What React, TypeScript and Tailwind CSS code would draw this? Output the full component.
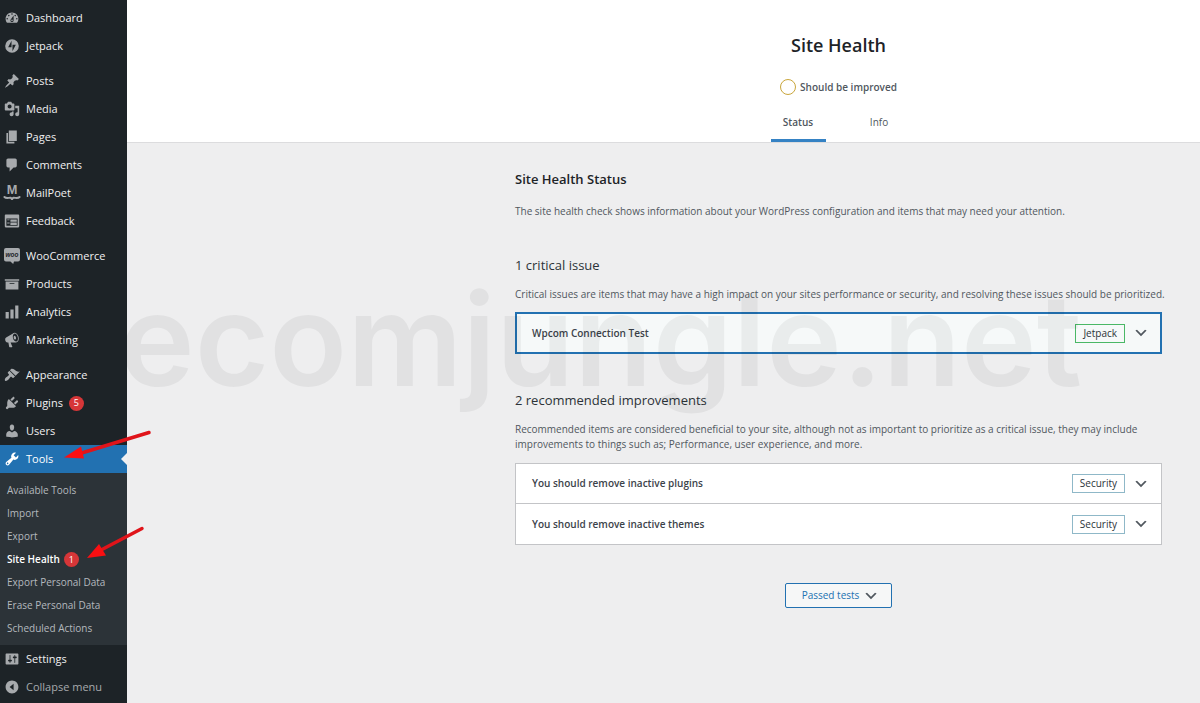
import React from "react";

const icons: Record<string, string> = {
  dashboard:
    "M3.76 16h12.48c1.1-1.37 1.76-3.11 1.76-5 0-4.42-3.58-8-8-8s-8 3.58-8 8c0 1.89.66 3.63 1.76 5zM10 4c.55 0 1 .45 1 1s-.45 1-1 1-1-.45-1-1 .45-1 1-1zM6 6c.55 0 1 .45 1 1s-.45 1-1 1-1-.45-1-1 .45-1 1-1zm8 0c.55 0 1 .45 1 1s-.45 1-1 1-1-.45-1-1 .45-1 1-1zm-5.37 5.55L12 7v6c0 1.1-.9 2-2 2s-2-.9-2-2c0-.57.24-1.08.63-1.45zM4 10c.55 0 1 .45 1 1s-.45 1-1 1-1-.45-1-1 .45-1 1-1zm12 0c.55 0 1 .45 1 1s-.45 1-1 1-1-.45-1-1 .45-1 1-1zm-5 3c0-.55-.45-1-1-1s-1 .45-1 1 .45 1 1 1 1-.45 1-1z",
  jetpack:
    "M10 1.5a8.5 8.5 0 1 0 0 17 8.5 8.5 0 0 0 0-17zM9.4 11.6H5.2l4.2-8.3zM10.6 16.7V8.4h4.2z",
  posts:
    "M10.44 3.02l1.82-1.82 6.36 6.35-1.83 1.82c-1.05-.68-2.48-.57-3.41.36l-.75.75c-.92.93-1.04 2.35-.35 3.41l-1.83 1.82-2.41-2.41-2.8 2.79c-.42.42-3.38 2.71-3.8 2.29s1.86-3.39 2.28-3.81l2.79-2.79L4.1 9.36l1.83-1.82c1.05.69 2.48.57 3.4-.36l.75-.75c.93-.92 1.05-2.35.36-3.41z",
  media:
    "M13 11V4c0-.55-.45-1-1-1h-1.67L9 1H5L3.67 3H2c-.55 0-1 .45-1 1v7c0 .55.45 1 1 1h10c.55 0 1-.45 1-1zM7 4.5c1.38 0 2.5 1.12 2.5 2.5S8.38 9.5 7 9.5 4.5 8.38 4.5 7 5.62 4.5 7 4.5zM14 6h5v10.5c0 1.38-1.12 2.5-2.5 2.5S14 17.88 14 16.5s1.12-2.5 2.5-2.5c.17 0 .34.02.5.05V9h-3V6zm-4 8.05V13h2v3.5c0 1.38-1.12 2.5-2.5 2.5S7 17.88 7 16.5 8.12 14 9.5 14c.17 0 .34.02.5.05z",
  pages: "M6 15V2h10v13H6zm-1 1h8v2H3V5h2v11z",
  comments:
    "M5 2h9c1.1 0 2 .9 2 2v7c0 1.1-.9 2-2 2h-2l-5 5v-5H5c-1.1 0-2-.9-2-2V4c0-1.1.9-2 2-2z",
  feedback:
    "M2 2h16c.55 0 1 .45 1 1v14c0 .55-.45 1-1 1H2c-.55 0-1-.45-1-1V3c0-.55.45-1 1-1zm15 14V7H3v9h14zM4 8v1h3V8H4zm4 0v3h8V8H8zm-4 4v1h3v-1H4zm4 0v3h8v-3H8z",
  products: "M19 4v2H1V4h18zM2 7h16v10H2V7zm11 3V9H7v1h6z",
  analytics: "M18 18V2h-4v16h4zm-6 0V7H8v11h4zm-6 0v-8H2v8h4z",
  marketing:
    "M18.15 5.94c.46 1.62.38 3.22-.02 4.48-.42 1.28-1.26 2.18-2.3 2.48-.16.06-.26.06-.4.06-.06.02-.12.02-.18.02-.06.02-.14.02-.22.02h-6.8l2.22 5.5c.02.14-.06.26-.14.34-.08.1-.24.16-.34.16H6.95c-.1 0-.26-.06-.34-.16-.08-.08-.16-.2-.14-.34l-1-5.5H4.25l-.02-.02c-.5.06-1.08-.18-1.54-.62s-.88-1.08-1.06-1.88c-.24-.8-.2-1.56-.02-2.2.18-.62.58-1.08 1.06-1.3l.02-.02 9-5.4c.1-.06.18-.1.24-.16.06-.04.14-.08.24-.12.16-.08.28-.12.5-.18 1.04-.3 2.24.1 3.22.98s1.84 2.24 2.26 3.86zm-2.58 5.98h-.02c.4-.1.74-.34 1.04-.7.58-.7.86-1.76.86-3.04 0-.64-.1-1.3-.28-1.98-.34-1.36-1.02-2.5-1.78-3.24s-1.68-1.1-2.46-.88c-.82.22-1.4.96-1.7 2-.32 1.04-.28 2.36.06 3.72.38 1.36 1 2.5 1.8 3.24.78.74 1.62 1.1 2.48.88zm-2.54-7.08c.22-.04.42-.02.62.04.38.16.76.48 1.02 1s.42 1.2.42 1.78c0 .3-.04.56-.12.8-.18.48-.44.84-.86.94-.34.1-.8-.06-1.14-.4s-.64-.86-.78-1.5c-.18-.62-.12-1.24.02-1.72s.48-.84.82-.94z",
  appearance:
    "M14.48 11.06L7.41 3.99l1.5-1.5c.5-.56 2.3-.47 3.51.32 1.21.8 1.43 1.28 2.91 2.1 1.18.64 2.45 1.26 4.45.85zm-.71.71L6.7 4.7 4.93 6.47c-.39.39-.39 1.02 0 1.41l1.06 1.06c.39.39.39 1.03 0 1.42-.6.6-1.43 1.11-2.21 1.69-.35.26-.7.53-1.01.84C1.43 14.23.4 16.08 1.4 17.07c.99 1 2.84-.03 4.18-1.36.31-.31.58-.66.85-1.02.57-.78 1.08-1.61 1.69-2.21.39-.39 1.02-.39 1.41 0l1.06 1.06c.39.39 1.02.39 1.41 0z",
  plugins:
    "M13.11 4.36L9.87 7.6 8 5.73l3.24-3.24c.35-.34 1.05-.2 1.56.32.52.51.66 1.21.31 1.55zm-8 1.77l.91-1.12 9.01 9.01-1.19.84c-.71.71-2.63 1.16-3.82 1.16H6.14L4.9 17.26c-.59.59-1.54.59-2.12 0-.59-.58-.59-1.53 0-2.12l1.24-1.24v-3.88c0-1.13.4-3.19 1.09-3.89zm7.26 3.97l3.24-3.24c.34-.35 1.04-.21 1.55.31.52.51.66 1.21.31 1.55l-3.24 3.25z",
  users:
    "M10 9.25c-2.27 0-2.73-3.44-2.73-3.44C7 4.02 7.82 2 9.97 2c2.16 0 2.98 2.02 2.71 3.81 0 0-.41 3.44-2.68 3.44zm0 2.57L12.72 10c2.39 0 4.52 2.33 4.52 4.53v2.49s-3.65 1.13-7.24 1.13c-3.65 0-7.24-1.13-7.24-1.13v-2.49c0-2.25 1.94-4.48 4.47-4.48z",
  tools:
    "M16.68 9.77c-1.34 1.34-3.3 1.67-4.95.99l-5.41 6.52c-.99.99-2.59.99-3.58 0s-.99-2.59 0-3.57l6.52-5.42c-.68-1.65-.35-3.61.99-4.95 1.28-1.28 3.12-1.62 4.72-1.06l-2.89 2.89 2.82 2.82 2.86-2.87c.53 1.58.18 3.39-1.08 4.65zM3.81 16.21c.4.39 1.04.39 1.43 0 .4-.4.4-1.04 0-1.43-.39-.4-1.03-.4-1.43 0-.39.39-.39 1.03 0 1.43z",
  settings:
    "M18 16V4c0-.55-.45-1-1-1H3c-.55 0-1 .45-1 1v12c0 .55.45 1 1 1h14c.55 0 1-.45 1-1zM8 11h1c.55 0 1 .45 1 1s-.45 1-1 1H8v1.5c0 .28-.22.5-.5.5s-.5-.22-.5-.5V13H6c-.55 0-1-.45-1-1s.45-1 1-1h1V5.5c0-.28.22-.5.5-.5s.5.22.5.5V11zm5-2h-1c-.55 0-1-.45-1-1s.45-1 1-1h1V5.5c0-.28.22-.5.5-.5s.5.22.5.5V7h1c.55 0 1 .45 1 1s-.45 1-1 1h-1v5.5c0 .28-.22.5-.5.5s-.5-.22-.5-.5V9z",
  collapse:
    "M10 2c4.42 0 8 3.58 8 8s-3.58 8-8 8-8-3.58-8-8 3.58-8 8-8zm2 12V6l-5 4z",
};

function MenuIcon({ name }: { name: string }) {
  if (name === "mailpoet") {
    return (
      <svg viewBox="0 0 20 20" className="size-4 shrink-0 overflow-visible fill-current" aria-hidden="true">
        <text x="10" y="11" textAnchor="middle" fontSize="16" fontWeight="700" fontFamily="Liberation Sans, sans-serif">
          M
        </text>
        <path
          d="M.5 15c2.2 2.2 5.5.8 7.5 1 1.2.1 1.5 1.6 2 1.6s.8-1.5 2-1.6c2-.2 5.3 1.2 7.5-1"
          fill="none"
          stroke="currentColor"
          strokeWidth="2.4"
          strokeLinecap="round"
        />
      </svg>
    );
  }
  if (name === "woocommerce") {
    return (
      <svg viewBox="0 0 20 20" className="size-4 shrink-0 overflow-visible" aria-hidden="true">
        <path
          d="M2.5 0h15A2.5 2.5 0 0 1 20 2.500v12a2.500 2.500 0 0 1-2.500 2.500H12.500l-1 3-3.500-3H2.500A2.500 2.500 0 0 1 0 14.500v-12A2.500 2.500 0 0 1 2.500 0z"
          fill="currentColor"
        />
        <text
          x="10"
          y="11.5"
          textAnchor="middle"
          fontSize="8"
          fontWeight="700"
          fontStyle="italic"
          fontFamily="Liberation Sans, sans-serif"
          fill="#1d2327"
        >
          woo
        </text>
      </svg>
    );
  }
  return (
    <svg viewBox="0 0 20 20" className="size-4 shrink-0 fill-current" aria-hidden="true">
      <path fillRule="evenodd" d={icons[name]} />
    </svg>
  );
}

function Chevron() {
  return (
    <svg viewBox="0 0 20 20" className="size-4 shrink-0 fill-[#50575e]" aria-hidden="true">
      <path d="M5 6l5 5 5-5 2 1-7 7-7-7z" />
    </svg>
  );
}

interface MenuItem {
  label: string;
  icon: string;
  badge?: number;
  active?: boolean;
}

const menuGroups: MenuItem[][] = [
  [
    { label: "Dashboard", icon: "dashboard" },
    { label: "Jetpack", icon: "jetpack" },
  ],
  [
    { label: "Posts", icon: "posts" },
    { label: "Media", icon: "media" },
    { label: "Pages", icon: "pages" },
    { label: "Comments", icon: "comments" },
    { label: "MailPoet", icon: "mailpoet" },
    { label: "Feedback", icon: "feedback" },
  ],
  [
    { label: "WooCommerce", icon: "woocommerce" },
    { label: "Products", icon: "products" },
    { label: "Analytics", icon: "analytics" },
    { label: "Marketing", icon: "marketing" },
  ],
  [
    { label: "Appearance", icon: "appearance" },
    { label: "Plugins", icon: "plugins", badge: 5 },
    { label: "Users", icon: "users" },
    { label: "Tools", icon: "tools", active: true },
  ],
];

const toolsMenu = [
  { label: "Available Tools" },
  { label: "Import" },
  { label: "Export" },
  { label: "Site Health", badge: 1, current: true },
  { label: "Export Personal Data" },
  { label: "Erase Personal Data" },
  { label: "Scheduled Actions" },
];

function Badge({ count }: { count: number }) {
  return (
    <span className="flex size-[15px] items-center justify-center rounded-full bg-[#d63638] text-[9px] font-normal text-white">
      {count}
    </span>
  );
}

function MenuLink({ item }: { item: MenuItem }) {
  return (
    <a
      href="#"
      className={
        item.active
          ? "relative flex h-7 items-center gap-[6px] bg-[#2271b1] pl-1 text-white"
          : "flex h-7 items-center gap-[6px] pl-1 text-[#f0f0f1]"
      }
    >
      <span className={item.active ? "text-white" : "text-[#a7aaad]"}>
        <MenuIcon name={item.icon} />
      </span>
      {item.label}
      {item.badge && <Badge count={item.badge} />}
      {item.active && (
        <span className="absolute right-0 border-y-[6px] border-r-[6px] border-y-transparent border-r-[#f0f0f1]" />
      )}
    </a>
  );
}

function Sidebar() {
  return (
    <nav className="relative z-10 w-[127px] shrink-0 bg-[#1d2327] pt-1 text-[11px]">
      <div className="flex flex-col gap-[7px]">
        {menuGroups.map((group) => (
          <div key={group[0].label}>
            {group.map((item) => (
              <MenuLink key={item.label} item={item} />
            ))}
          </div>
        ))}
      </div>

      {/* Tools submenu */}
      <div className="bg-[#2c3338] pt-[6px] pb-[5px] text-[10px]">
        {toolsMenu.map((item) => (
          <a
            key={item.label}
            href="#"
            className={
              item.current
                ? "flex h-[23px] items-center gap-1 pl-[7px] font-semibold text-white"
                : "flex h-[23px] items-center pl-[7px] text-[#b4b9be]"
            }
          >
            {item.label}
            {item.badge && <Badge count={item.badge} />}
          </a>
        ))}
      </div>

      <MenuLink item={{ label: "Settings", icon: "settings" }} />
      <button type="button" className="flex h-7 w-full items-center gap-[6px] pl-1 text-[#a7aaad]">
        <MenuIcon name="collapse" />
        Collapse menu
      </button>
    </nav>
  );
}

interface IssueProps {
  title: string;
  tag: string;
}

function Issue({ title, tag }: IssueProps) {
  const critical = tag === "Jetpack";
  return (
    <button type="button" className="flex h-10 w-full items-center gap-2 pr-3 pl-4 text-left">
      <span className="flex-1 font-semibold text-[#3c434a]">{title}</span>
      <span
        className={
          critical
            ? "border border-[#4ab866] px-[7px] leading-[17px] font-medium text-[#2c3338]"
            : "border border-[#8fb8c8] px-[7px] leading-[17px] font-medium text-[#2c3338]"
        }
      >
        {tag}
      </span>
      <Chevron />
    </button>
  );
}

function Header() {
  return (
    <header className="border-b border-[#dcdcde] bg-white">
      <div className="mr-[38px] ml-auto flex max-w-[647px] flex-col items-center pt-8">
        <h1 className="text-[18px] leading-[26px] font-semibold text-[#1d2327]">Site Health</h1>
        <div className="mt-5 flex h-[18px] items-center gap-1 font-semibold text-[#50575e]">
          <span className="size-4 rounded-full border border-[#c9a63c]" />
          Should be improved
        </div>
        <nav className="mt-[10px] flex gap-[26px]">
          <a
            href="#"
            className="flex h-9 w-[55px] items-center justify-center border-b-[3px] border-[#3582c4] font-semibold text-[#50575e]"
          >
            Status
          </a>
          <a
            href="#"
            className="flex h-9 w-[55px] items-center justify-center border-b-[3px] border-transparent text-[#50575e]"
          >
            Info
          </a>
        </nav>
      </div>
    </header>
  );
}

function RedArrows() {
  return (
    <svg width="160" height="570" className="pointer-events-none absolute top-0 left-0 z-20" aria-hidden="true">
      <g stroke="#e0141a" strokeWidth="3.5" strokeLinecap="round">
        <path d="M149 432.5L80 453.5" />
        <path d="M142 528.5L102 549.5" />
      </g>
      <g fill="#fa0f12">
        <path d="M64 457.5L81 446.5L84 458.5z" />
        <path d="M87 558L99 544L106 555.5z" />
      </g>
    </svg>
  );
}

export default function App() {
  return (
    <div className="relative flex min-h-screen bg-[#eeeeef] font-['Open_Sans',sans-serif] text-[10px]">
      <Sidebar />

      <div className="relative min-w-0 flex-1 overflow-hidden">
        <Header />

        <main className="mr-[38px] ml-auto max-w-[647px] pt-[26px] text-[#50575e]">
          <h2 className="text-[13px] leading-5 font-semibold text-[#1d2327]">Site Health Status</h2>
          <p className="mt-[15px] leading-[15px]">
            The site health check shows information about your WordPress configuration and items that may need your
            attention.
          </p>

          {/* Critical issues */}
          <h3 className="mt-9 text-[13px] leading-5 text-[#2c3338]">1 critical issue</h3>
          <p className="mt-3 leading-[15px] whitespace-nowrap">
            Critical issues are items that may have a high impact on your sites performance or security, and resolving
            these issues should be prioritized.
          </p>
          <div className="mt-[10px] border border-[#2271b1] bg-[#f6f9f9] outline outline-[#2271b1] -outline-offset-2">
            <Issue title="Wpcom Connection Test" tag="Jetpack" />
          </div>

          {/* Recommended improvements */}
          <h3 className="mt-9 text-[13px] leading-5 text-[#2c3338]">2 recommended improvements</h3>
          <p className="mt-3 leading-[15px]">
            Recommended items are considered beneficial to your site, although not as important to prioritize as a
            critical issue, they may include improvements to things such as; Performance, user experience, and more.
          </p>
          <div className="mt-[11px] divide-y divide-[#c3c4c7] border border-[#c3c4c7] bg-white">
            <Issue title="You should remove inactive plugins" tag="Security" />
            <Issue title="You should remove inactive themes" tag="Security" />
          </div>

          <div className="mt-[38px] flex justify-center">
            <button
              type="button"
              className="flex h-[25px] items-center gap-1 rounded-[2px] border border-[#2271b1] bg-[#f6f7f7] pr-3 pl-4 text-[#2271b1]"
            >
              Passed tests
              <Chevron />
            </button>
          </div>
        </main>

        {/* Watermark */}
        <div className="pointer-events-none absolute top-[252px] -left-2 font-['Inter',sans-serif] text-[128px] leading-[176px] font-semibold text-black/5 select-none">
          ecomjungle.net
        </div>
      </div>

      <RedArrows />
    </div>
  );
}
